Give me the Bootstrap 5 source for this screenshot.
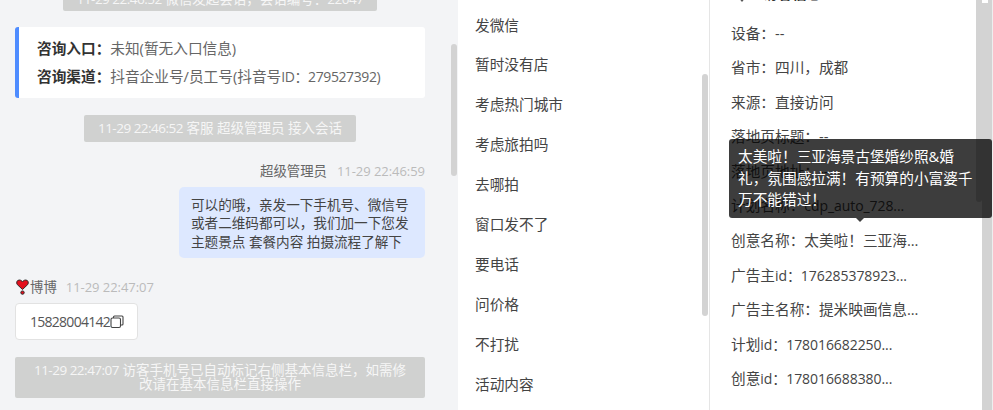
<!DOCTYPE html>
<html lang="zh">
<head>
<meta charset="utf-8">
<link href="https://cdn.jsdelivr.net/npm/bootstrap@5.3.0/dist/css/bootstrap.min.css" rel="stylesheet">
<style>
html,body{height:410px;overflow:hidden;margin:0}
body{font-family:"Open Sans","Noto Sans CJK SC",sans-serif;font-size:14.67px;color:#555;background:#fff}
.shell{height:410px;position:relative;overflow:hidden}
.chat-pane{width:458px;background:#f3f4f6;position:relative;padding:0 33px 0 15px}
.list-pane{width:252px;border-right:1px solid #e5e5e5;position:relative;padding-left:17px}
.info-pane{width:272px;position:relative;padding-left:21px}
.rail{width:11px;background:#d3d3d3;border-right:1px solid #eee;position:relative}
.rail-notch{position:absolute;left:0;top:0;width:6px;height:3px;background:#fff}
.thumb{position:absolute;width:6px;background:#d3d3d3;border-radius:3px}
.thumb-chat{left:451px;top:44px;height:132px}
.thumb-list{right:1px;top:74px;height:242px}
.thumb-info{right:0;top:-4px;height:206px}
.num{font-size:14px;letter-spacing:-.4px}
.num-info{font-size:14px;letter-spacing:-.07px}
.num-sm{letter-spacing:-.5px}
.sys-msg{background:#d0d1d0;color:#f6f6f6;font-size:13.5px;border-radius:2px;text-align:center}
.sys-top{height:21px;line-height:19px;margin-top:-10px;width:314px;margin-left:48px;overflow:hidden;white-space:nowrap}
.entry{margin-top:16px;height:71px;background:#fff;border-left:4px solid #4e8cff;border-radius:3px;padding:7px 0 0 18px;line-height:28px;color:#666}
.entry b{color:#333;font-weight:700}
.sys-join{width:272px;height:27px;line-height:27px;margin:17px 0 0 69px}
.meta{font-size:13.4px;line-height:18px;color:#666}
.meta-time{color:#bbb;margin-left:9px;font-size:13px;letter-spacing:-.05px}
.meta-right{margin-top:20px;text-align:right}
.meta-right .meta-time{margin-left:10px}
.bubble{width:246px;margin:7px 0 0 164px;height:71px;background:#dde8ff;border-radius:5px;padding:9px 12px;font-size:13.6px;line-height:18.3px;color:#444}
.meta-left{margin-top:20px;display:flex;align-items:center}
.heart{margin:0 1px 0 1px}
.phone{margin-top:7px;width:123px;height:37px;background:#fff;border:1px solid #e2e2e2;border-radius:4px;font-size:14px;line-height:35px;padding-left:14px;color:#555;display:flex;align-items:center}
.phone-digits{letter-spacing:-.73px}
.sys-long{margin-top:17px;height:41px;padding:6px 16px 0;line-height:14px;width:410px}
.qa-row{height:39.9px;line-height:39.9px;color:#444;white-space:nowrap}
.qa-first{margin-top:5.500px}
.info-head{height:17px;margin-top:-15px;margin-bottom:13.500px;display:flex;color:#333;font-weight:700;line-height:17px;padding-left:32px;position:relative}
.info-head svg{position:absolute;left:6px;top:12px}
.info-row{height:34.6px;line-height:34.6px;color:#444;white-space:nowrap}
.tip{position:absolute;left:729px;top:139px;width:263px;height:79px;background:rgba(0,0,0,.76);color:#fff;border-radius:3px;padding:7px 18px 7px 9px;line-height:21.5px;font-size:14.67px}
.tip::after{content:"";position:absolute;left:127px;bottom:-4px;border:4px solid transparent;border-bottom:0;border-top-color:rgba(0,0,0,.76)}
</style>
</head>
<body>
<div class="shell d-flex">
  <div class="chat-pane flex-shrink-0">
    <div class="sys-msg sys-top"><span class="num-sm">11-29 22:46:52</span> 微信发起会话，会话编号：<span class="num-sm">22047</span></div>
    <div class="entry">
      <div><b>咨询入口：</b>未知(暂无入口信息)</div>
      <div><b>咨询渠道：</b>抖音企业号/员工号(抖音号<span class="num">ID：279527392)</span></div>
    </div>
    <div class="sys-msg sys-join"><span class="num-sm">11-29 22:46:52</span> 客服 超级管理员 接入会话</div>
    <div class="meta meta-right">超级管理员<span class="meta-time">11-29 22:46:59</span></div>
    <div class="bubble">可以的哦，亲发一下手机号、微信号或者二维码都可以，我们加一下您发主题景点 套餐内容 拍摄流程了解下</div>
    <div class="meta meta-left">
      <svg class="heart" width="13" height="16" viewBox="0 0 13 16" aria-hidden="true"><path d="M6.500 10.500 1.300 5.600C0 4 .8 1 3.200 1 4.800 1 5.900 1.800 6.500 3c.6-1.200 1.700-2 3.300-2 2.400 0 3.200 3 1.900 4.600z" fill="#e3101e" stroke="#222" stroke-width=".9"/><circle cx="6.500" cy="13.600" r="1.700" fill="#e3101e" stroke="#222" stroke-width=".9"/></svg>
      博博<span class="meta-time">11-29 22:47:07</span>
    </div>
    <div class="phone"><span class="phone-digits">15828004142</span><svg width="14" height="14" viewBox="0 0 14 14" fill="none" stroke="#444" stroke-width="1.100" aria-hidden="true"><rect x="1" y="3" width="9.500" height="9.500" rx="1.500"/><path d="M3.500 3V2a1 1 0 0 1 1-1h7.500a1 1 0 0 1 1 1v7a1 1 0 0 1-1 1h-1.500"/></svg></div>
    <div class="sys-msg sys-long"><span class="num-sm">11-29 22:47:07</span> 访客手机号已自动标记右侧基本信息栏，如需修改请在基本信息栏直接操作</div>
  </div>
  <div class="list-pane flex-shrink-0">
    <div class="qa-row qa-first">发微信</div>
    <div class="qa-row">暂时没有店</div>
    <div class="qa-row">考虑热门城市</div>
    <div class="qa-row">考虑旅拍吗</div>
    <div class="qa-row">去哪拍</div>
    <div class="qa-row">窗口发不了</div>
    <div class="qa-row">要电话</div>
    <div class="qa-row">问价格</div>
    <div class="qa-row">不打扰</div>
    <div class="qa-row">活动内容</div>
    <div class="thumb thumb-list"></div>
  </div>
  <div class="info-pane flex-shrink-0">
    <div class="info-head"><svg width="10" height="6" viewBox="0 0 10 6" aria-hidden="true"><path d="M1 0h8L5 5z" fill="#555"/></svg>访客信息</div>
    <div class="info-row">设备：--</div>
    <div class="info-row">省市：四川，成都</div>
    <div class="info-row">来源：直接访问</div>
    <div class="info-row">落地页标题：--</div>
    <div class="info-row">落地页地址：--</div>
    <div class="info-row">计划名称：<span class="num-info">cdp_auto_728...</span></div>
    <div class="info-row">创意名称：太美啦！三亚海...</div>
    <div class="info-row">广告主<span class="num-info">id：176285378923...</span></div>
    <div class="info-row">广告主名称：提米映画信息...</div>
    <div class="info-row">计划<span class="num-info">id：178016682250...</span></div>
    <div class="info-row">创意<span class="num-info">id：178016688380...</span></div>
    <div class="thumb thumb-info"></div>
  </div>
  <div class="rail flex-shrink-0"><div class="rail-notch"></div></div>
  <div class="thumb thumb-chat"></div>
  <div class="tip">太美啦！三亚海景古堡婚纱照&amp;婚礼，氛围感拉满！有预算的小富婆千万不能错过！</div>
</div>
<script src="https://cdn.jsdelivr.net/npm/bootstrap@5.3.0/dist/js/bootstrap.bundle.min.js"></script>
</body>
</html>
